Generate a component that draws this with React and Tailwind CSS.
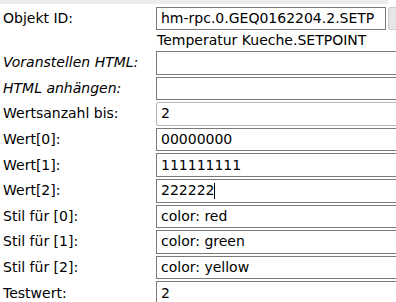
import React from 'react';

const rows = [
  { label: 'Voranstellen HTML:', value: '', italic: true },
  { label: 'HTML anhängen:', value: '', italic: true },
  { label: 'Wertsanzahl bis:', value: '2', light: true },
  { label: 'Wert[0]:', value: '00000000' },
  { label: 'Wert[1]:', value: '111111111' },
  { label: 'Wert[2]:', value: '222222', caret: true },
  { label: 'Stil für [0]:', value: 'color: red' },
  { label: 'Stil für [1]:', value: 'color: green' },
  { label: 'Stil für [2]:', value: 'color: yellow' },
  { label: 'Testwert:', value: '2' },
];

const Field = ({ value, light, caret, className = '' }) => (
  <div
    className={`h-[23.6px] flex items-center pl-[4px] bg-white border whitespace-nowrap overflow-hidden ${
      light ? 'border-[#b4b4b4] rounded-[2px]' : 'border-[#7a7a7a]'
    } ${className}`}
  >
    <span>{value}</span>
    {caret && <span className="inline-block w-px h-[16px] bg-black" />}
  </div>
);

export default function App() {
  return (
    <div
      className="w-[396px] h-[302px] overflow-hidden bg-white text-black text-[14px]"
      style={{ fontFamily: '"DejaVu Sans", Verdana, sans-serif' }}
    >
      <div className="h-[4px] w-[388px] bg-[#ececec]" />

      <div className="mt-[3px] flex items-center h-[23px]">
        <div className="w-[156px] pl-[3px] shrink-0">Objekt ID:</div>
        <Field value="hm-rpc.0.GEQ0162204.2.SETP" className="w-[230px] shrink-0 h-[23px]" />
        <div className="ml-[2px] w-[12px] h-[23px] shrink-0 bg-[#e6e6e6] border border-[#cfcfcf] rounded-[2px]" />
      </div>

      <div className="h-[21px] pl-[157px] leading-[21px] whitespace-nowrap">Temperatur Kueche.SETPOINT</div>

      <div className="flex flex-col gap-[2px]">
        {rows.map((r) => (
          <div key={r.label} className="flex items-center">
            <div className={`w-[156px] pl-[3px] shrink-0 whitespace-nowrap ${r.italic ? 'italic' : ''}`}>
              {r.label}
            </div>
            <Field value={r.value} light={r.light} caret={r.caret} className="w-[260px] shrink-0" />
          </div>
        ))}
      </div>
    </div>
  );
}
